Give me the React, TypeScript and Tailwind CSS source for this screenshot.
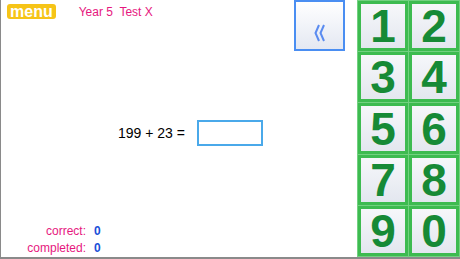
import React from "react";

const keys = ["1", "2", "3", "4", "5", "6", "7", "8", "9", "0"];

export default function App() {
  return (
    <div
      className="w-[460px] h-[259px] flex bg-white border-l border-b-2 border-[#8a8a8a] overflow-hidden"
      style={{ fontFamily: '"Liberation Sans", Arial, sans-serif' }}
    >
      <div className="flex-1 flex flex-col">
        <div className="h-[51px] flex items-start">
          <div className="ml-[6px] mt-[4px] h-[15px] px-[3px] rounded-[3px] bg-[#f6c417] text-white font-bold text-[16px] leading-[15px]">
            menu
          </div>
          <div className="ml-[23px] mt-[5px] text-[12px] leading-[14px] text-[#e6177e] whitespace-pre">
            Year 5  Test X
          </div>
          <button className="ml-auto mr-[12px] w-[51px] h-[51px] border-2 border-[#4a8ef2] bg-gradient-to-b from-[#ffffff] to-[#e4e8f2] flex items-center justify-center pt-[14px]">
            <svg width="12" height="18" viewBox="0 0 12 18">
              <polyline points="5,1 1.5,9 5,17" fill="none" stroke="#5b8cf0" strokeWidth="2" />
              <polyline points="10,1 6.5,9 10,17" fill="none" stroke="#5b8cf0" strokeWidth="2" />
            </svg>
          </button>
        </div>
        <div className="flex-1 flex items-center pl-[117px] pb-[8px]">
          <span className="text-[14px] text-black">199 + 23 =</span>
          <div className="ml-[12px] w-[66px] h-[26px] border-2 border-[#4aa9ea] bg-white" />
        </div>
        <div className="pb-[0px] text-[12px] leading-[17px]">
          <div className="flex">
            <span className="w-[85px] text-right text-[#e6177e]">correct:</span>
            <span className="ml-[8px] text-[#1a4fd8] font-bold">0</span>
          </div>
          <div className="flex">
            <span className="w-[85px] text-right text-[#e6177e]">completed:</span>
            <span className="ml-[8px] text-[#1a4fd8] font-bold">0</span>
          </div>
        </div>
      </div>
      <div className="w-[103px] h-full grid grid-cols-2 grid-rows-5 gap-[1px] p-[1px] bg-[#72d180]">
        {keys.map((k) => (
          <div
            key={k}
            className="border-[3px] border-[#3dbb50] bg-gradient-to-b from-[#f6f7fa] to-[#e3e7ef] flex items-center justify-center text-[46px] font-bold text-[#168a36] leading-none"
          >
            {k}
          </div>
        ))}
      </div>
    </div>
  );
}
